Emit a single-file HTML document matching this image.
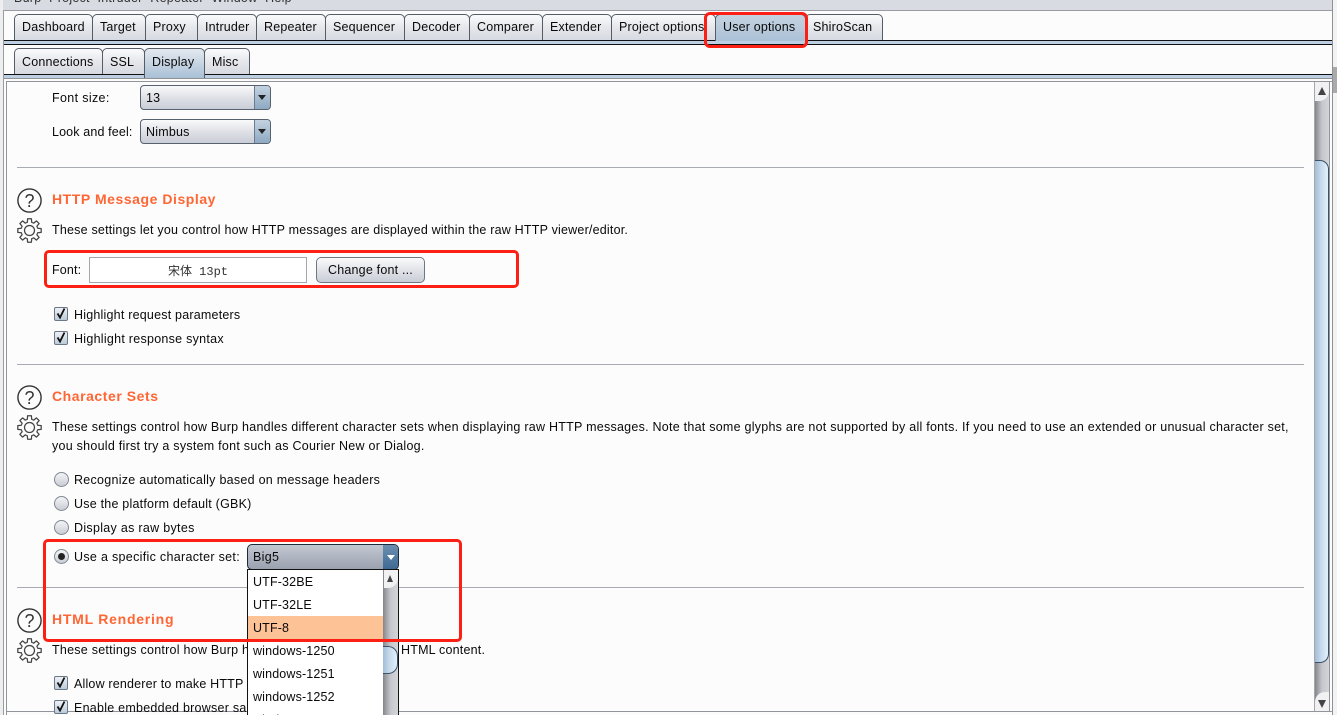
<!DOCTYPE html>
<html><head><meta charset="utf-8">
<style>
html,body{margin:0;padding:0;width:1337px;height:715px;overflow:hidden;background:#fcfcfc}
body{position:relative;font-family:"Liberation Sans","Noto Sans CJK SC",sans-serif;font-size:12.5px;color:#0a0a0a}
.a{position:absolute}
.t{position:absolute;white-space:nowrap;line-height:16px;letter-spacing:.25px;margin-top:1px}
.tab{position:absolute;box-sizing:border-box;border:1px solid #555c66;border-bottom:none;border-radius:5px 5px 0 0;background:linear-gradient(#fbfbfc,#e6e8ec 45%,#d5d8e0);text-align:left;padding-left:7px;white-space:nowrap;line-height:24px;letter-spacing:.18px;overflow:hidden}
.s{line-height:26px}
.sel{background:linear-gradient(#c6d3e0,#a9c0d6)}
.hr{position:absolute;left:17px;width:1287px;height:1px;background:#a9abb2}
.h{position:absolute;left:52px;color:#ff6633;font-weight:bold;font-size:14px;letter-spacing:.55px;line-height:18px;white-space:nowrap}
.red{position:absolute;box-sizing:border-box;border:3px solid #fb1f14;border-radius:5px}
.combo{position:absolute;box-sizing:border-box;width:131px;height:25px;left:140px;border:1px solid #58626e;border-radius:4px;background:linear-gradient(#fafafb,#dfe1e7 50%,#c9cdd6);padding-left:5px;line-height:25px;letter-spacing:.2px}
.combo i{position:absolute;right:0;top:0;width:15px;height:23px;background:linear-gradient(#c3d2e0,#8ea9c2);border-left:1px solid #6c7c8c;border-radius:0 3px 3px 0}
.combo i:after{content:"";position:absolute;left:3px;top:9px;border:4px solid transparent;border-top:5px solid #222;border-bottom:0}
.cb{position:absolute;left:54px;width:12px;height:12px;border:1px solid #6b7886;border-radius:2px;background:linear-gradient(#eef1f5,#bccbda)}
.rb{position:absolute;left:54px;width:13px;height:13px;border:1px solid #7f8a95;border-radius:50%;background:linear-gradient(#f4f5f7,#c8ccd3)}
.o{position:absolute;left:248px;width:135px;height:23px;line-height:25px;padding-left:5px;box-sizing:border-box;letter-spacing:.15px}
</style></head><body>
<svg width="0" height="0" style="position:absolute"><defs>
<path id="th" d="M-3.25-7.85L-2.2-8.2L-1.9-11.7L1.9-11.7L2.2-8.2L3.25-7.85" fill="none" stroke="#444" stroke-width="1.25" stroke-linejoin="round"/>
<g id="gear" transform="translate(12.5 12.5)">
<use href="#th"/><use href="#th" transform="rotate(45)"/><use href="#th" transform="rotate(90)"/><use href="#th" transform="rotate(135)"/><use href="#th" transform="rotate(180)"/><use href="#th" transform="rotate(225)"/><use href="#th" transform="rotate(270)"/><use href="#th" transform="rotate(315)"/>
<circle r="5" fill="none" stroke="#444" stroke-width="1.25"/></g>
</defs></svg>
<!-- window chrome -->
<div class="a" style="left:0;top:0;width:1337px;height:10px;background:#d8dbe2;overflow:hidden">
<div class="t" style="left:14px;top:-10px;color:#333;word-spacing:4px;margin:0">Burp Project Intruder Repeater Window Help</div></div>
<div class="a" style="left:0;top:10px;width:1333px;height:1px;background:#9a9ca3"></div>
<div class="a" style="left:0;top:0;width:3px;height:715px;background:#eee"></div>
<div class="a" style="left:3px;top:10px;width:1px;height:705px;background:#9a9ca3"></div>
<div class="a" style="left:1332px;top:0;width:1px;height:715px;background:#8f9197"></div>
<div class="a" style="left:1333px;top:0;width:4px;height:715px;background:#f3f3f3"></div>
<div class="a" style="left:1333px;top:67px;width:4px;height:26px;background:#aaa"></div>

<!-- top tabs -->
<div class="tab" style="left:14px;top:14px;width:79px;height:27px">Dashboard</div>
<div class="tab" style="left:92px;top:14px;width:54px;height:27px">Target</div>
<div class="tab" style="left:145px;top:14px;width:53px;height:27px">Proxy</div>
<div class="tab" style="left:197px;top:14px;width:60px;height:27px">Intruder</div>
<div class="tab" style="left:256px;top:14px;width:70px;height:27px">Repeater</div>
<div class="tab" style="left:325px;top:14px;width:80px;height:27px">Sequencer</div>
<div class="tab" style="left:404px;top:14px;width:66px;height:27px">Decoder</div>
<div class="tab" style="left:469px;top:14px;width:74px;height:27px">Comparer</div>
<div class="tab" style="left:542px;top:14px;width:70px;height:27px">Extender</div>
<div class="tab" style="left:611px;top:14px;width:105px;height:27px">Project options</div>
<div class="tab" style="left:805px;top:14px;width:78px;height:27px">ShiroScan</div>
<div class="tab sel" style="left:715px;top:14px;width:91px;height:29px">User options</div>
<div class="a" style="left:4px;top:40px;width:711px;height:1px;background:#111"></div>
<div class="a" style="left:806px;top:40px;width:526px;height:1px;background:#111"></div>
<div class="a" style="left:4px;top:41px;width:1328px;height:3px;background:#bdd0e3"></div>
<div class="a" style="left:4px;top:44px;width:1328px;height:1px;background:#111"></div>

<!-- sub tabs -->
<div class="tab s" style="left:14px;top:48px;width:89px;height:27px">Connections</div>
<div class="tab s" style="left:102px;top:48px;width:43px;height:27px">SSL</div>
<div class="tab s" style="left:204px;top:48px;width:46px;height:27px">Misc</div>
<div class="a" style="left:4px;top:74px;width:1328px;height:1px;background:#111"></div>
<div class="a" style="left:4px;top:75px;width:1328px;height:3px;background:#bdd0e3"></div>
<div class="a" style="left:4px;top:78px;width:1328px;height:1px;background:#111;opacity:.45"></div>
<div class="tab s sel" style="left:144px;top:48px;width:61px;height:30px;background:linear-gradient(#e4e9ef,#a9c0d6)">Display</div>

<!-- panel -->
<div class="a" style="left:4px;top:79px;width:1328px;height:2px;background:#fcfcfc"></div>
<div class="a" style="left:6px;top:81px;width:1326px;height:1px;background:#92949b"></div>
<div class="a" style="left:6px;top:81px;width:1px;height:634px;background:#92949b"></div>
<div class="a" style="left:6px;top:711px;width:1326px;height:1px;background:#92949b"></div>
<div class="a" style="left:1329px;top:81px;width:1px;height:631px;background:#92949b"></div>

<!-- scrollbar -->
<div class="a" style="left:1314px;top:82px;width:15px;height:629px;background:linear-gradient(90deg,#85868c,#c6c7cc 50%,#d4d5da);border-left:1px solid #a5a7ad;box-sizing:border-box"></div>
<div class="a" style="left:1315px;top:82px;width:14px;height:19px;background:#f1f1f3;border-radius:0 0 10px 0"></div>
<div class="a" style="left:1318px;top:87px;border:4px solid transparent;border-bottom:8px solid #444;border-top:0"></div>
<div class="a" style="left:1315px;top:160px;width:14px;height:503px;box-sizing:border-box;border:1px solid #3c5268;border-left:none;border-radius:0 9px 9px 0;background:linear-gradient(90deg,#a3bdd5,#c8dcee 50%,#e2f1fc)"></div>
<div class="a" style="left:1315px;top:692px;width:14px;height:19px;background:#f1f1f3;border-radius:10px 0 0 0"></div>
<div class="a" style="left:1318px;top:700px;border:4px solid transparent;border-top:8px solid #444;border-bottom:0"></div>

<!-- font size -->
<div class="t" style="left:52px;top:89px;letter-spacing:.35px">Font size:</div>
<div class="combo" style="top:85px">13<i></i></div>
<div class="t" style="left:52px;top:123px;letter-spacing:.14px">Look and feel:</div>
<div class="combo" style="top:119px">Nimbus<i></i></div>
<div class="hr" style="top:167px"></div>

<!-- http message display -->
<svg class="a" style="left:17px;top:188px" width="26" height="26" viewBox="0 0 26 26"><circle cx="12.5" cy="12.5" r="11.6" fill="none" stroke="#333" stroke-width="1.4"/><text x="12.5" y="19" text-anchor="middle" font-family="Liberation Sans" font-size="18" fill="#333">?</text></svg>
<svg class="a" style="left:17px;top:218px" width="26" height="26" viewBox="0 0 26 26"><use href="#gear"/></svg>
<div class="h" style="top:190px">HTTP Message Display</div>
<div class="t" style="left:52px;top:221px;letter-spacing:.207px">These settings let you control how HTTP messages are displayed within the raw HTTP viewer/editor.</div>
<div class="t" style="left:52px;top:261px;letter-spacing:.15px">Font:</div>
<div class="a" style="left:89px;top:257px;width:218px;height:26px;box-sizing:border-box;border:1px solid #a5a7ad;background:#fff;text-align:center;font:12px/28px 'Liberation Mono','Noto Sans CJK SC',monospace;color:#333">宋体 13pt</div>
<div class="a" style="left:316px;top:257px;width:109px;height:26px;box-sizing:border-box;border:1px solid #6f7782;border-radius:5px;background:linear-gradient(#fafafb,#dfe1e7 55%,#c9cdd6);text-align:center;line-height:24px;letter-spacing:.2px">Change font ...</div>
<div class="cb" style="top:307px"></div>
<svg class="a" style="left:55px;top:307px" width="13" height="13"><path d="M2.5 6.5l2.5 4 4.5-9" fill="none" stroke="#111" stroke-width="1.8"/></svg>
<div class="t" style="left:74px;top:306px;letter-spacing:.21px">Highlight request parameters</div>
<div class="cb" style="top:331px"></div>
<svg class="a" style="left:55px;top:331px" width="13" height="13"><path d="M2.5 6.5l2.5 4 4.5-9" fill="none" stroke="#111" stroke-width="1.8"/></svg>
<div class="t" style="left:74px;top:330px;letter-spacing:.27px">Highlight response syntax</div>
<div class="hr" style="top:364px"></div>

<!-- character sets -->
<svg class="a" style="left:17px;top:385px" width="26" height="26" viewBox="0 0 26 26"><circle cx="12.5" cy="12.5" r="11.6" fill="none" stroke="#333" stroke-width="1.4"/><text x="12.5" y="19" text-anchor="middle" font-family="Liberation Sans" font-size="18" fill="#333">?</text></svg>
<svg class="a" style="left:17px;top:415px" width="26" height="26" viewBox="0 0 26 26"><use href="#gear"/></svg>
<div class="h" style="top:387px">Character Sets</div>
<div class="t" style="left:52px;top:418px;letter-spacing:.25px">These settings control how Burp handles different character sets when displaying raw HTTP messages. Note that some glyphs are not supported by all fonts. If you need to use an extended or unusual character set,</div>
<div class="t" style="left:52px;top:437px;letter-spacing:.26px">you should first try a system font such as Courier New or Dialog.</div>
<div class="rb" style="top:472px"></div><div class="t" style="left:74px;top:471px;letter-spacing:.27px">Recognize automatically based on message headers</div>
<div class="rb" style="top:496px"></div><div class="t" style="left:74px;top:495px;letter-spacing:.22px">Use the platform default (GBK)</div>
<div class="rb" style="top:520px"></div><div class="t" style="left:74px;top:519px;letter-spacing:.3px">Display as raw bytes</div>
<div class="rb" style="top:549px"></div><div class="a" style="left:58px;top:553px;width:7px;height:7px;border-radius:50%;background:#222"></div>
<div class="t" style="left:74px;top:548px;letter-spacing:.31px">Use a specific character set:</div>
<div class="hr" style="top:587px"></div>

<!-- html rendering -->
<svg class="a" style="left:17px;top:608px" width="26" height="26" viewBox="0 0 26 26"><circle cx="12.5" cy="12.5" r="11.6" fill="none" stroke="#333" stroke-width="1.4"/><text x="12.5" y="19" text-anchor="middle" font-family="Liberation Sans" font-size="18" fill="#333">?</text></svg>
<svg class="a" style="left:17px;top:638px" width="26" height="26" viewBox="0 0 26 26"><use href="#gear"/></svg>
<div class="h" style="top:610px;letter-spacing:.75px">HTML Rendering</div>
<div class="t" style="left:52px;top:641px">These settings control how Burp handles</div>
<div class="t" style="left:401px;top:641px;letter-spacing:.2px">HTML content.</div>
<div class="cb" style="top:676px"></div>
<svg class="a" style="left:55px;top:676px" width="13" height="13"><path d="M2.5 6.5l2.5 4 4.5-9" fill="none" stroke="#111" stroke-width="1.8"/></svg>
<div class="t" style="left:74px;top:675px;letter-spacing:.18px">Allow renderer to make HTTP requests</div>
<div class="cb" style="top:700px"></div>
<svg class="a" style="left:55px;top:700px" width="13" height="13"><path d="M2.5 6.5l2.5 4 4.5-9" fill="none" stroke="#111" stroke-width="1.8"/></svg>
<div class="t" style="left:74px;top:699px">Enable embedded browser sandbox</div>

<!-- dropdown -->
<div class="a" style="left:247px;top:544px;width:152px;height:26px;box-sizing:border-box;border:1px solid #1d2a3a;border-radius:5px;background:linear-gradient(#c3c8d2,#9aa1af);padding-left:5px;line-height:24px;letter-spacing:.3px">Big5
<div class="a" style="right:0;top:0;width:15px;height:24px;background:linear-gradient(#6c8fb0,#3f6a94);border-radius:0 4px 4px 0"></div>
<div class="a" style="right:3px;top:10px;border:4px solid transparent;border-top:5px solid #fff;border-bottom:0"></div></div>
<div class="a" style="left:247px;top:569px;width:152px;height:146px;box-sizing:border-box;border:1px solid #111;border-bottom:none;background:#fff"></div>
<div class="a" style="left:383px;top:570px;width:15px;height:145px;background:linear-gradient(90deg,#85868c,#c6c7cc 50%,#d4d5da)"></div>
<div class="a" style="left:384px;top:570px;width:14px;height:18px;background:#f1f1f3;border-radius:0 0 10px 0"></div>
<div class="a" style="left:387px;top:575px;border:3.5px solid transparent;border-bottom:7px solid #444;border-top:0"></div>
<div class="a" style="left:383px;top:646px;width:15px;height:28px;box-sizing:border-box;border:1px solid #3c5268;border-left:none;border-radius:0 10px 10px 0;background:linear-gradient(90deg,#a3bdd5,#c8dcee 50%,#e2f1fc)"></div>
<div class="a" style="left:248px;top:616px;width:135px;height:23px;background:#fdc397"></div>
<div class="o" style="top:570px">UTF-32BE</div>
<div class="o" style="top:593px">UTF-32LE</div>
<div class="o" style="top:616px">UTF-8</div>
<div class="o" style="top:639px">windows-1250</div>
<div class="o" style="top:662px">windows-1251</div>
<div class="o" style="top:685px">windows-1252</div>
<div class="o" style="top:708px">windows-1253</div>

<!-- red annotations -->
<div class="red" style="left:704px;top:12px;width:104px;height:36px;border-radius:6px"></div>
<div class="red" style="left:44px;top:250px;width:475px;height:38px"></div>
<div class="red" style="left:43px;top:539px;width:419px;height:103px"></div>
</body></html>
